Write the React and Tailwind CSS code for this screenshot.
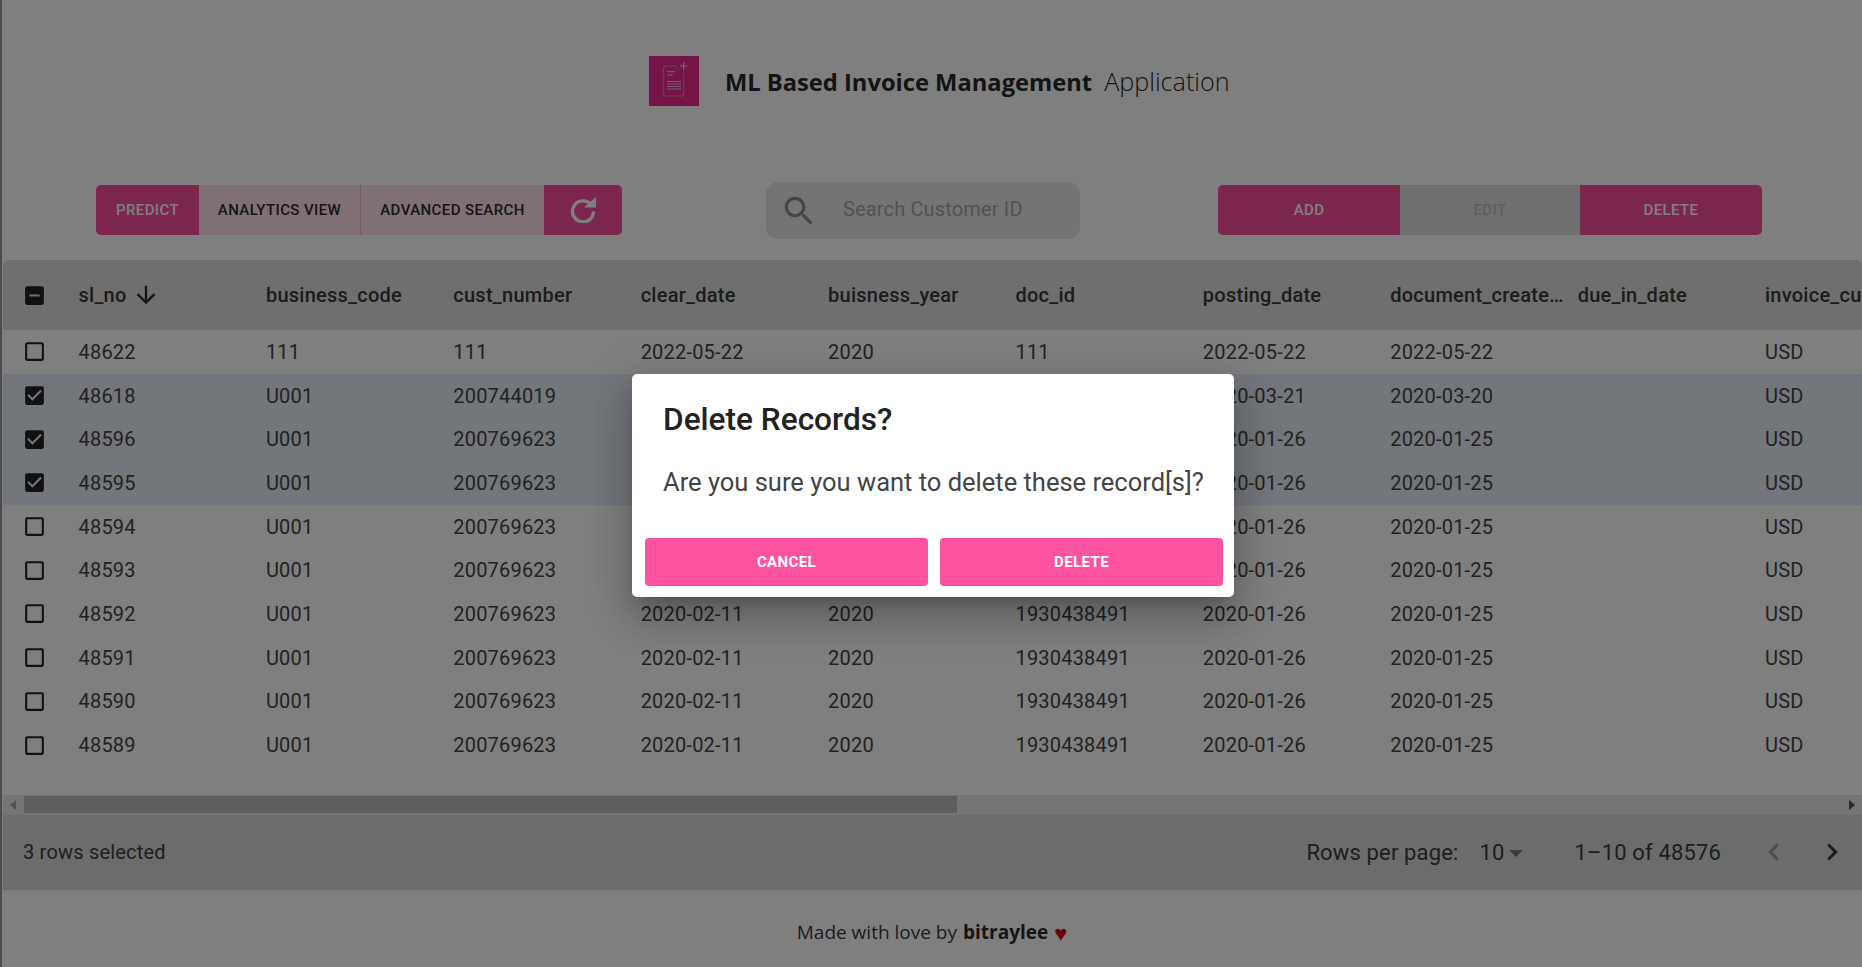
const CHECK_BLANK = "M19 5v14H5V5h14m0-2H5c-1.1 0-2 .9-2 2v14c0 1.1.9 2 2 2h14c1.1 0 2-.9 2-2V5c0-1.1-.9-2-2-2z";
const CHECK_ON = "M19 3H5c-1.11 0-2 .9-2 2v14c0 1.1.89 2 2 2h14c1.11 0 2-.9 2-2V5c0-1.1-.89-2-2-2zm-9 14l-5-5 1.41-1.41L10 14.17l7.59-7.59L19 8l-9 9z";
const CHECK_SOME = "M19 3H5c-1.1 0-2 .9-2 2v14c0 1.1.9 2 2 2h14c1.1 0 2-.9 2-2V5c0-1.1-.9-2-2-2zm-2 10H7v-2h10v2z";

const columns = ['business_code', 'cust_number', 'clear_date', 'buisness_year', 'doc_id', 'posting_date', 'document_create_date', 'due_in_date', 'invoice_currency'];

const rows = [
  { id: '48622', code: '111', cust: '111', clear: '2022-05-22', year: '2020', doc: '111', post: '2022-05-22', created: '2022-05-22' },
  { id: '48618', code: 'U001', cust: '200744019', clear: '2020-04-05', year: '2020', doc: '1930650208', post: '2020-03-21', created: '2020-03-20', selected: true },
  { id: '48596', code: 'U001', cust: '200769623', clear: '2020-02-11', year: '2020', doc: '1930438491', post: '2020-01-26', created: '2020-01-25', selected: true },
  { id: '48595', code: 'U001', cust: '200769623', clear: '2020-02-11', year: '2020', doc: '1930438491', post: '2020-01-26', created: '2020-01-25', selected: true },
  { id: '48594', code: 'U001', cust: '200769623', clear: '2020-02-11', year: '2020', doc: '1930438491', post: '2020-01-26', created: '2020-01-25' },
  { id: '48593', code: 'U001', cust: '200769623', clear: '2020-02-11', year: '2020', doc: '1930438491', post: '2020-01-26', created: '2020-01-25' },
  { id: '48592', code: 'U001', cust: '200769623', clear: '2020-02-11', year: '2020', doc: '1930438491', post: '2020-01-26', created: '2020-01-25' },
  { id: '48591', code: 'U001', cust: '200769623', clear: '2020-02-11', year: '2020', doc: '1930438491', post: '2020-01-26', created: '2020-01-25' },
  { id: '48590', code: 'U001', cust: '200769623', clear: '2020-02-11', year: '2020', doc: '1930438491', post: '2020-01-26', created: '2020-01-25' },
  { id: '48589', code: 'U001', cust: '200769623', clear: '2020-02-11', year: '2020', doc: '1930438491', post: '2020-01-26', created: '2020-01-25' },
];

const Icon = ({ d, className }) => (
  <svg viewBox="0 0 24 24" fill="currentColor" className={className}>
    <path d={d} />
  </svg>
);

const Logo = () => (
  <div className="w-[50px] h-[50px] bg-[#ea2a8e] flex items-center justify-center shrink-0">
    <svg viewBox="0 0 50 50" className="w-[50px] h-[50px]" fill="none" stroke="#e678b4" strokeWidth="1">
      <path d="M28.7 10H14.7v30h20V14" />
      <path d="M31 10h7.4M34.7 6.3v7.4" strokeWidth="1.2" stroke="#f8cfe4" />
      <path d="M18 15.7h8M18 19h6" stroke="#f8cfe4" />
      <path d="M18 25.5h14M18 28h14M18 30.5h14M18 33h14" stroke="#f4b8d6" />
    </svg>
  </div>
);

const Cell = ({ children }) => (
  <div className="pl-[10px] pr-[2px] truncate">{children}</div>
);

export default function App() {
  return (
    <div className="relative h-screen overflow-hidden bg-white flex font-['Roboto',sans-serif]">
      <div className="w-[2px] bg-[#9497a8] shrink-0" />
      <div className="flex-1 min-w-0">
        {/* title */}
        <div className="mt-[56px] h-[50px] pl-[647px] flex items-center">
          <Logo />
          <h1 className="ml-[26px] pt-[2px] leading-none font-['Open_Sans',sans-serif] text-[#282828] whitespace-nowrap">
            <span className="text-[23.7px] font-bold">ML Based Invoice Management</span>
            <span className="ml-[12px] text-[25.2px] font-light">Application</span>
          </h1>
        </div>

        {/* toolbar */}
        <div className="mt-[76px] h-[57px] flex items-start">
          <div className="mt-[3px] ml-[94px] w-[526px] h-[50px] flex rounded-[5px] overflow-hidden text-[15px] font-medium tracking-[0.4px]">
            <button className="w-[103px] bg-[#fa4d9a] text-white">PREDICT</button>
            <button className="w-[162px] bg-[#ffe0ed] text-[#2c2c2c] border-r border-[#f4b8d0]">ANALYTICS VIEW</button>
            <button className="w-[183px] bg-[#ffe0ed] text-[#2c2c2c]">ADVANCED SEARCH</button>
            <button className="w-[78px] bg-[#fa4d9a] text-white flex items-center justify-center">
              <svg viewBox="0 0 26 26" className="w-[26px] h-[26px]" fill="none" stroke="currentColor" strokeWidth="3.4">
                <path d="M20.5 7A10.5 10.5 0 1 0 23.5 14.5" />
                <path d="M14 10.5h12V0z" fill="currentColor" stroke="none" />
              </svg>
            </button>
          </div>
          <div className="ml-[144px] w-[314px] h-[57px] rounded-[12px] bg-[#e8e8e8] flex items-center pl-[14px] text-[#666]">
            <Icon d="M15.5 14h-.79l-.28-.27C15.41 12.59 16 11.11 16 9.5 16 5.91 13.09 3 9.5 3S3 5.91 3 9.5 5.91 16 9.5 16c1.61 0 3.09-.59 4.23-1.57l.27.28v.79l5 4.99L20.49 19l-4.99-5zm-6 0C7.01 14 5 11.99 5 9.5S7.01 5 9.5 5 14 7.01 14 9.5 11.99 14 9.5 14z" className="w-[38px] h-[38px] text-[#8a8a8a]" />
            <span className="ml-[25px] mb-[3px] text-[20px] text-[#a4a4a4] tracking-[0.15px]">Search Customer ID</span>
          </div>
          <div className="mt-[3px] ml-[138px] w-[544px] h-[50px] flex rounded-[5px] overflow-hidden text-[15px] font-medium tracking-[0.4px] text-white">
            <button className="w-[182px] bg-[#fa4d9a]">ADD</button>
            <button className="w-[180px] bg-[#dfdfdf] text-[#bdbdbd]">EDIT</button>
            <button className="w-[182px] bg-[#fa4d9a]">DELETE</button>
          </div>
        </div>

        {/* table */}
        <div className="mt-[21px] ml-[1px] overflow-hidden rounded-t-[5px] w-[1859px]">
          <div className="grid grid-cols-[65.5px_repeat(9,187.4px)_200px] h-[70px] items-center bg-[#dedede] text-[20px] font-medium tracking-[0.25px] text-[#383838]">
            <div className="pl-[19px]">
              <Icon d={CHECK_SOME} className="w-[25px] h-[25px] text-[#222]" />
            </div>
            <div className="pl-[10px] flex items-center">
              sl_no
              <Icon d="M20 12l-1.41-1.41L13 16.17V4h-2v12.17l-5.58-5.59L4 12l8 8 8-8z" className="ml-[5px] w-[28px] h-[28px] text-[#2c2c2c]" />
            </div>
            {columns.map((c) => (
              <Cell key={c}>{c}</Cell>
            ))}
          </div>

          {rows.map((r) => (
            <div
              key={r.id}
              className={`grid grid-cols-[65.5px_repeat(9,187.4px)_200px] h-[43.7px] items-center text-[20px] text-[#444] tracking-[0.2px] ${r.selected ? 'bg-[#e6edf6]' : 'bg-white'}`}
            >
              <div className="pl-[19px]">
                <Icon d={r.selected ? CHECK_ON : CHECK_BLANK} className="w-[25px] h-[25px] text-[#222]" />
              </div>
              <Cell>{r.id}</Cell>
              <Cell>{r.code}</Cell>
              <Cell>{r.cust}</Cell>
              <Cell>{r.clear}</Cell>
              <Cell>{r.year}</Cell>
              <Cell>{r.doc}</Cell>
              <Cell>{r.post}</Cell>
              <Cell>{r.created}</Cell>
              <Cell></Cell>
              <Cell>USD</Cell>
            </div>
          ))}

          {/* scrollbar */}
          <div className="mt-[28px] h-[20px] bg-[#eaeaea] flex items-center relative">
            <span className="ml-[7px] w-0 h-0 border-y-[5px] border-y-transparent border-r-[6px] border-r-[#a3a3a3]" />
            <div className="ml-[8px] w-[933px] h-[17px] bg-[#bcbcbc]" />
            <span className="ml-auto mr-[7px] w-0 h-0 border-y-[5px] border-y-transparent border-l-[6px] border-l-[#505050]" />
          </div>

          {/* pagination */}
          <div className="h-[75px] bg-[#d8d8d8] flex items-center pl-[20px] text-[#3c3c3c]">
            <span className="text-[20px] tracking-[0.2px]">3 rows selected</span>
            <div className="ml-auto flex items-center pr-[13px] text-[22px] tracking-[0.15px]">
              <span>Rows per page:</span>
              <span className="ml-[21px]">10</span>
              <span className="ml-[4px] mt-[3px] w-0 h-0 border-x-[7px] border-x-transparent border-t-[7px] border-t-[#777]" />
              <span className="ml-[52px]">1–10 of 48576</span>
              <Icon d="M15.41 16.59L10.83 12l4.58-4.59L14 6l-6 6 6 6 1.41-1.41z" className="ml-[36px] w-[34px] h-[34px] text-[#999]" />
              <Icon d="M8.59 16.59L13.17 12 8.59 7.41 10 6l6 6-6 6-1.41-1.41z" className="ml-[24px] w-[34px] h-[34px] text-[#333]" />
            </div>
          </div>
        </div>

        {/* credit */}
        <div className="mt-[28px] flex justify-center items-center text-[19px] leading-[28px] font-['Open_Sans',sans-serif] text-[#3a3a3a]">
          <span>Made with love by</span>
          <b className="ml-[6px] text-[#2c2c2c]">bitraylee</b>
          <span className="ml-[6px] text-[22px] text-[#d80818]">♥</span>
        </div>
      </div>

      {/* modal backdrop */}
      <div className="absolute inset-0 bg-black/50 flex items-center justify-center pl-[4px] pt-[4px]">
        <div className="w-[602px] h-[223px] bg-white rounded-[5px] shadow-[0_11px_15px_-7px_rgba(0,0,0,0.2),0_24px_38px_3px_rgba(0,0,0,0.14),0_9px_46px_8px_rgba(0,0,0,0.12)]">
          <h2 className="pl-[31px] pt-[27px] text-[31.6px] leading-[38px] font-medium text-[#222]">Delete Records?</h2>
          <p className="pl-[31px] mt-[25px] text-[25.5px] leading-[36px] text-[#444] whitespace-nowrap">Are you sure you want to delete these record[s]?</p>
          <div className="mt-[38px] pl-[13px] pr-[11px] flex gap-[12px]">
            <button className="flex-1 h-[48px] rounded-[4px] bg-[#fd529f] text-white text-[15px] font-bold tracking-[0.4px]">CANCEL</button>
            <button className="flex-1 h-[48px] rounded-[4px] bg-[#fd529f] text-white text-[15px] font-bold tracking-[0.4px]">DELETE</button>
          </div>
        </div>
      </div>
    </div>
  );
}
